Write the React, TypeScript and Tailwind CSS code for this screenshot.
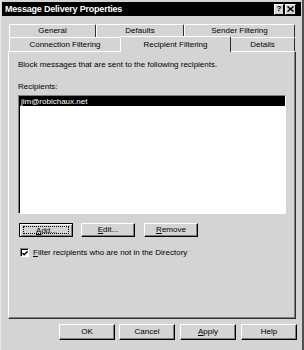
import React from "react";

const btn =
  "h-full flex items-center justify-center bg-[#d4d4d4] border-t border-l border-t-white border-l-white border-r border-b border-r-black border-b-black shadow-[inset_-1px_-1px_0_#808080]";

function Tab({ label, w, selected }: { label: string; w: string; selected?: boolean }) {
  return (
    <div
      className={
        "flex items-center justify-center border-t border-l border-r border-t-white border-l-white border-r-[#303030] rounded-t-[2px] bg-[#d4d4d4] " +
        w +
        (selected ? " h-[16px] -mb-[1px] relative z-10 -ml-[1px] -mr-[1px]" : " h-full")
      }
    >
      <span className="leading-none">{label}</span>
    </div>
  );
}

export default function App() {
  return (
    <div className="w-[304px] h-[350px] bg-[#d4d4d4] font-['Liberation_Sans',sans-serif] text-[8px] text-black flex flex-col border-l border-l-[#e8e8e8] border-r-2 border-r-[#505050] pt-[2px] pl-[1px] pr-[1px] overflow-hidden">
      {/* Title bar */}
      <div className="h-[14px] bg-black flex items-center justify-between pl-[3px] pr-[5px]">
        <span className="text-white font-bold text-[9px] leading-none tracking-[-0.2px]">Message Delivery Properties</span>
        <div className="flex gap-[1px] h-[11px]">
          <div className="w-[10px] h-full bg-[#d4d4d4] border-t border-l border-white border-r border-b border-r-black border-b-black flex items-center justify-center font-bold text-[8px] leading-none">?</div>
          <div className="w-[11px] h-full bg-[#d4d4d4] border-t border-l border-white border-r border-b border-r-black border-b-black flex items-center justify-center">
            <svg width="7" height="6" viewBox="0 0 7 6">
              <path d="M0.5 0.5 L6.5 5.5 M6.5 0.5 L0.5 5.5" stroke="black" strokeWidth="1.4" />
            </svg>
          </div>
        </div>
      </div>

      {/* Tabs + panel */}
      <div className="mt-[8px] ml-[6px] w-[288px] flex flex-col">
        <div className="h-[13px] flex pl-[1px]">
          <Tab label="General" w="w-[87px]" />
          <Tab label="Defaults" w="w-[88px]" />
          <Tab label="Sender Filtering" w="w-[111px]" />
        </div>
        <div className="h-[14px] flex items-end pl-[1px]">
          <Tab label="Connection Filtering" w="w-[112px]" />
          <Tab label="Recipient Filtering" w="w-[111px]" selected />
          <Tab label="Details" w="w-[65px]" />
        </div>
        <div className="h-[268px] border-t border-l border-t-white border-l-white border-r border-b border-r-[#303030] border-b-[#303030] shadow-[inset_-1px_-1px_0_#808080] flex flex-col pl-[9px] pr-[9px]">
          <div className="mt-[9px] leading-none">Block messages that are sent to the following recipients.</div>
          <div className="mt-[14px] leading-none">Recipients:</div>
          <div className="mt-[4px] h-[119px] border-t border-l border-t-[#808080] border-l-[#808080] border-r border-b border-r-white border-b-white">
            <div className="h-full bg-white border-t border-l border-t-black border-l-black">
              <div className="h-[9px] bg-black text-white leading-none flex items-center pl-[1px]">jim@robichaux.net</div>
            </div>
          </div>
          <div className="mt-[9px] h-[14px] flex">
            <div className="w-[54px] h-full ml-[1px] border border-black">
              <div className="h-full relative flex items-center justify-center bg-[#d4d4d4] border-t border-l border-white shadow-[inset_-1px_-1px_0_#808080]">
                <span className="leading-none relative z-10">
                  <span className="underline">A</span>dd...
                </span>
                <div className="absolute left-[2px] right-[3px] top-[1px] bottom-[2px] border border-dotted border-black" />
              </div>
            </div>
            <div className={"w-[54px] ml-[8px] " + btn}>
              <span className="leading-none"><span className="underline">E</span>dit...</span>
            </div>
            <div className={"w-[54px] ml-[9px] " + btn}>
              <span className="leading-none"><span className="underline">R</span>emove</span>
            </div>
          </div>
          <div className="mt-[11px] flex items-center ml-[2px]">
            <div className="w-[9px] h-[9px] border-t border-l border-t-[#808080] border-l-[#808080] border-r border-b border-r-white border-b-white">
              <div className="w-full h-full bg-white border-t border-l border-black flex items-center justify-center">
                <svg width="7" height="7" viewBox="0 0 7 7">
                  <path d="M0.5 3 L2.5 5 L6.5 1" stroke="black" strokeWidth="1.6" fill="none" />
                </svg>
              </div>
            </div>
            <span className="ml-[4px] leading-none">
              <span className="underline">F</span>ilter recipients who are not in the Directory
            </span>
          </div>
        </div>
      </div>

      {/* Bottom buttons */}
      <div className="mt-[5px] h-[16px] flex pl-[57px]">
        <div className={"w-[56px] " + btn}><span className="leading-none">OK</span></div>
        <div className={"w-[56px] ml-[4px] " + btn}><span className="leading-none">Cancel</span></div>
        <div className={"w-[56px] ml-[5px] " + btn}><span className="leading-none"><span className="underline">A</span>pply</span></div>
        <div className={"w-[56px] ml-[5px] " + btn}><span className="leading-none">Help</span></div>
      </div>
    </div>
  );
}
